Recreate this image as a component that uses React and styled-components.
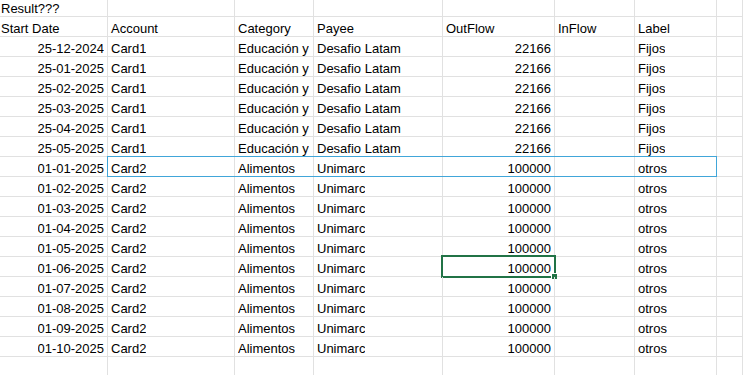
import React from "react";
import styled, { createGlobalStyle } from "styled-components";

const Global = createGlobalStyle`
  html, body { margin: 0; padding: 0; background: #ffffff; overflow: hidden; }
  body { font-family: "Liberation Sans", Arial, sans-serif; }
`;

const COLS = "110px 127px 79px 129px 112px 80px 82px 26px";

const Sheet = styled.div`
  margin-top: -3px;
  margin-left: -2px;
  width: 745px;
  display: flex;
  flex-direction: column;
`;

const Row = styled.div`
  position: relative;
  display: grid;
  grid-template-columns: ${COLS};
  height: 20px;
`;

const Cell = styled.div`
  box-sizing: border-box;
  height: 20px;
  border-right: 1px solid #e1e1e1;
  border-bottom: 1px solid #e1e1e1;
  padding: 0 3px 0 3px;
  display: flex;
  align-items: flex-end;
  justify-content: ${(p) => (p.$right ? "flex-end" : "flex-start")};
  overflow: hidden;
  white-space: nowrap;
  font-size: 13px;
  line-height: 15px;
  color: #000000;
`;

const ClipText = styled.span`
  display: block;
  overflow: hidden;
  max-width: 100%;
`;

const Highlight = styled.div`
  position: absolute;
  grid-row: 1;
  grid-column: 2 / 8;
  top: -1px;
  left: -1px;
  right: 0;
  bottom: 0;
  border: 1px solid #41a6d9;
  pointer-events: none;
`;

const Selection = styled.div`
  position: absolute;
  grid-row: 1;
  grid-column: 5 / 6;
  top: -2px;
  left: -2px;
  right: -1px;
  bottom: -1px;
  border: 2px solid #217346;
  pointer-events: none;
  &::after {
    content: "";
    position: absolute;
    right: -3px;
    bottom: -3px;
    width: 5px;
    height: 5px;
    background: #217346;
    border: 1px solid #ffffff;
    border-right: none;
    border-bottom: none;
  }
`;

const card1Dates = ["25-12-2024", "25-01-2025", "25-02-2025", "25-03-2025", "25-04-2025", "25-05-2025"];
const card2Dates = [
  "01-01-2025", "01-02-2025", "01-03-2025", "01-04-2025", "01-05-2025",
  "01-06-2025", "01-07-2025", "01-08-2025", "01-09-2025", "01-10-2025",
];

const rows = [
  ...card1Dates.map((d) => [d, "Card1", "Educación y", "Desafio Latam", "22166", "", "Fijos", ""]),
  ...card2Dates.map((d) => [d, "Card2", "Alimentos", "Unimarc", "100000", "", "otros", ""]),
];

const RIGHT = [true, false, false, false, true, false, false, false];

export default function App() {
  return (
    <>
      <Global />
      <Sheet>
        <Row>
          <Cell>Result???</Cell>
          {Array.from({ length: 7 }).map((_, i) => (
            <Cell key={i} />
          ))}
        </Row>
        <Row>
          {["Start Date", "Account", "Category", "Payee", "OutFlow", "InFlow", "Label", ""].map((h, i) => (
            <Cell key={i}>{h}</Cell>
          ))}
        </Row>
        {rows.map((r, ri) => (
          <Row key={ri}>
            {r.map((v, ci) => (
              <Cell key={ci} $right={RIGHT[ci]}>
                <ClipText>{v}</ClipText>
              </Cell>
            ))}
            {r[0] === "01-01-2025" && <Highlight />}
            {r[0] === "01-06-2025" && <Selection />}
          </Row>
        ))}
        <Row>
          {Array.from({ length: 8 }).map((_, i) => (
            <Cell key={i} />
          ))}
        </Row>
      </Sheet>
    </>
  );
}
